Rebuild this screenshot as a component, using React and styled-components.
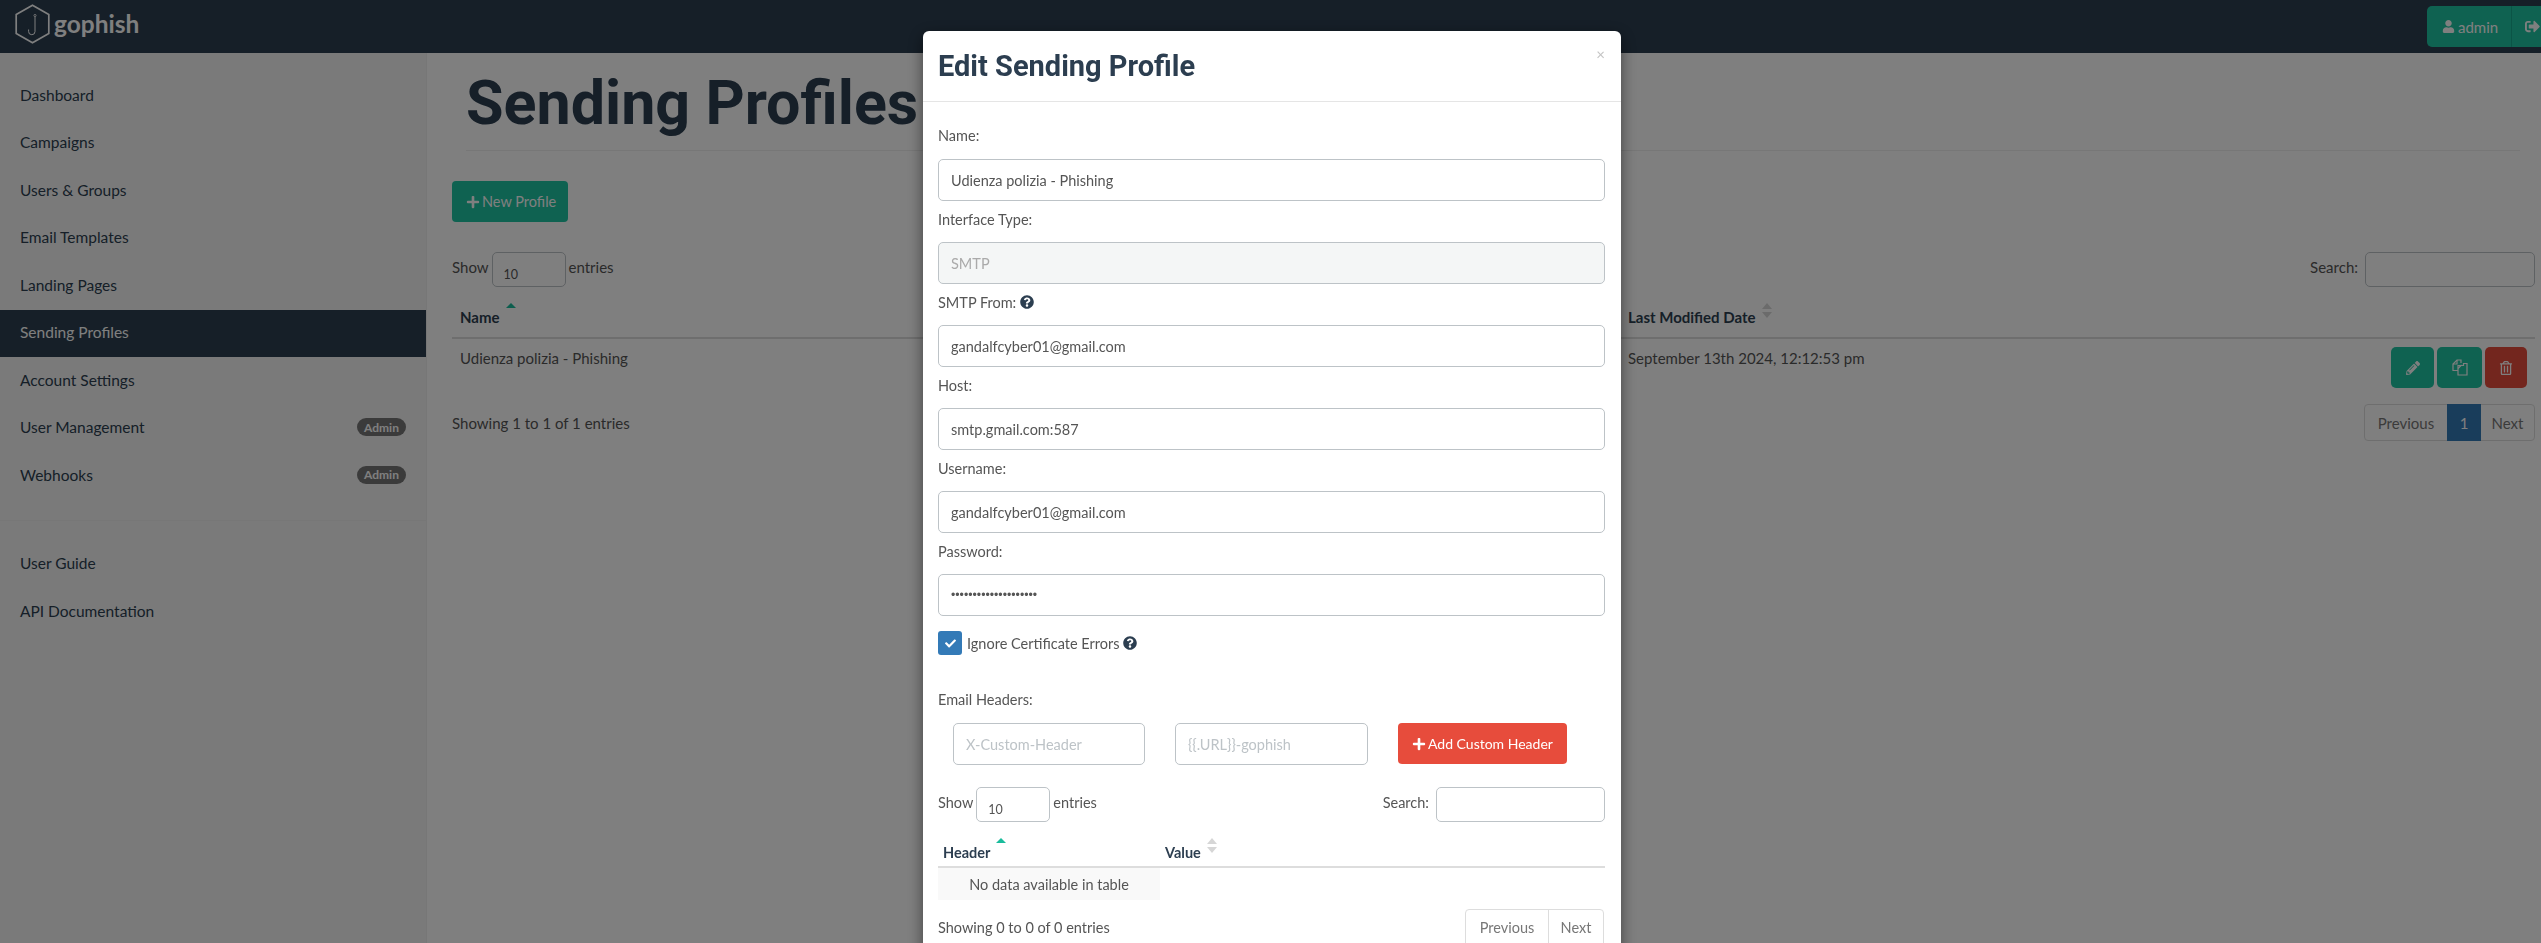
import React from 'react';
import styled, { createGlobalStyle } from 'styled-components';
import { FaPlus, FaUser, FaSignOutAlt, FaPencilAlt, FaRegTrashAlt, FaQuestionCircle, FaCheck } from 'react-icons/fa';

const GlobalStyle = createGlobalStyle`
  html, body {
    margin: 0;
    height: 100%;
    overflow: hidden;
    background: #fff;
    font-family: Lato, "Liberation Sans", sans-serif;
    color: #2c3e50;
  }
  * { box-sizing: border-box; }
`;

const Navbar = styled.header`
  height: 53px;
  background: #2c3e50;
  display: flex;
  align-items: flex-start;
  justify-content: space-between;
`;

const Brand = styled.div`
  display: flex;
  align-items: center;
  gap: 4px;
  padding: 4px 0 0 15px;
  color: #fff;
  font-size: 24.5px;
  font-weight: 700;
  line-height: 40px;
`;

const UserGroup = styled.div`
  display: flex;
  margin: 6px 0 0 0;
  height: 41px;
  width: 114px;
  flex: none;
  background: #1fc4a3;
  border-radius: 5px 0 0 5px;
  color: #fff;
  font-size: 15px;
  align-items: center;
`;

const UserPart = styled.div`
  width: 85px;
  height: 100%;
  padding-left: 15px;
  display: flex;
  align-items: center;
  gap: 3px;
  border-right: 1px solid #17a98c;
`;

const LogoutPart = styled.div`
  padding-left: 13px;
  display: flex;
  align-items: center;
  font-size: 15px;
`;

const Layout = styled.div`
  display: flex;
  height: 890px;
`;

const Sidebar = styled.nav`
  width: 427px;
  flex: none;
  background: #f5f5f5;
  border-right: 1px solid #eee;
  padding-top: 19px;
`;

const NavItem = styled.div`
  height: 47.5px;
  display: flex;
  align-items: center;
  justify-content: space-between;
  padding: 0 20px 2px;
  font-size: 15.5px;
  color: ${p => (p.$active ? '#fff' : '#2c3e50')};
  background: ${p => (p.$active ? '#2c3e50' : 'transparent')};
`;

const Badge = styled.span`
  width: 49px;
  height: 18px;
  border-radius: 9px;
  background: #777;
  color: #fff;
  font-size: 12px;
  font-weight: 700;
  display: flex;
  align-items: center;
  justify-content: center;
`;

const NavDivider = styled.div`
  height: 1px;
  background: #eee;
  margin: 20px 0 20px;
`;

const Main = styled.main`
  flex: 1;
  padding: 0 6px 0 25px;
  min-width: 0;
  color: #555;
  font-size: 15px;
`;

const PageHeader = styled.div`
  margin: 0 15px 0 14px;
  height: 98px;
  border-bottom: 1px solid #eee;
`;

const PageTitle = styled.h1`
  margin: 0;
  padding-top: 14px;
  font-family: Roboto, sans-serif;
  font-weight: 700;
  font-size: 61px;
  line-height: 72px;
  color: #2c3e50;
`;

const PrimaryButton = styled.button`
  display: flex;
  align-items: center;
  gap: 2px;
  height: 41px;
  width: 116px;
  margin-top: 30px;
  padding: 0 0 0 14px;
  border: 0;
  border-radius: 4px;
  background: #1fc4a3;
  color: #fff;
  font: inherit;
  font-size: 14.5px;
  svg { font-size: 14px; }
`;

const ControlRow = styled.div`
  display: flex;
  justify-content: space-between;
  align-items: center;
  margin-top: ${p => p.$top}px;
`;

const ControlLabel = styled.label`
  display: flex;
  align-items: flex-start;
  gap: 3px;
  line-height: 31px;
`;

const PageSelect = styled.div`
  width: ${p => p.$width}px;
  height: 35px;
  border: 1px solid #bdc3c7;
  border-radius: 5px;
  background: #fff;
  padding: 14px 0 0 11px;
  font-size: 12.5px;
  color: #555;
  line-height: 16px;
`;

const SearchInput = styled.input`
  width: ${p => p.$width}px;
  height: 35px;
  border: 1px solid #bdc3c7;
  border-radius: 5px;
  background: #fff;
  outline: none;
  margin-left: 4px;
`;

const DataTable = styled.table`
  width: 100%;
  border-collapse: collapse;
  table-layout: fixed;
  margin-top: ${p => p.$top}px;
`;

const HeadCell = styled.th`
  text-align: left;
  width: ${p => (p.$width ? `${p.$width}px` : 'auto')};
  height: ${p => p.$height}px;
  padding: ${p => p.$padTop}px 8px 0 ${p => p.$pad}px;
  border-bottom: 2px solid #ddd;
  color: #2c3e50;
  font-weight: 700;
  white-space: nowrap;
  vertical-align: top;
`;

const BodyCell = styled.td`
  padding: ${p => (p.$right ? 8 : 10)}px 8px 8px;
  vertical-align: top;
  text-align: ${p => (p.$right ? 'right' : 'left')};
  height: 57px;
  white-space: nowrap;
`;

const EmptyCell = styled.td`
  height: 33px;
  background: #f9f9f9;
  text-align: center;
  padding: 0;
`;

const SortMark = styled.svg`
  margin-left: 6px;
  width: 10px;
  height: 15px;
  vertical-align: 2px;
  overflow: visible;
  transform: translateY(-3px);
`;

const ActionRow = styled.div`
  display: inline-flex;
  gap: 3px;
`;

const IconButton = styled.button`
  width: ${p => p.$width}px;
  height: 41px;
  border: 0;
  border-radius: 5px;
  background: ${p => (p.$danger ? '#e74c3c' : '#1fc4a3')};
  color: #fff;
  font-size: 14px;
  display: flex;
  align-items: center;
  justify-content: center;
  padding: 0;
`;

const FooterRow = styled.div`
  display: flex;
  justify-content: space-between;
  align-items: flex-start;
  margin-top: ${p => p.$top}px;
`;

const FooterText = styled.div`
  line-height: 20px;
  padding-top: ${p => p.$top}px;
`;

const Pagination = styled.div`
  display: flex;
  height: 37px;
  flex: none;
  border: 1px solid #ddd;
  border-radius: 4px;
  background: #fff;
  color: #b0b5b9;
`;

const PageLink = styled.div`
  display: flex;
  align-items: center;
  justify-content: center;
  width: ${p => p.$width}px;
  margin: ${p => (p.$current ? '-1px 0' : '0')};
  background: ${p => (p.$current ? '#337ab7' : 'transparent')};
  color: ${p => (p.$current ? '#fff' : '#777')};
  border-right: ${p => (p.$line ? '1px solid #ddd' : '0')};
`;

const Backdrop = styled.div`
  position: fixed;
  inset: 0;
  background: rgba(0, 0, 0, 0.5);
`;

const ModalLayer = styled.div`
  position: fixed;
  inset: 0;
  overflow: hidden;
  padding: 31px 0 0 923px;
`;

const ModalCard = styled.div`
  position: relative;
  width: 698px;
  background: #fff;
  border-radius: 6px;
  box-shadow: 0 5px 15px rgba(0, 0, 0, 0.5);
  color: #555;
  font-size: 14.5px;
`;

const ModalHeader = styled.div`
  height: 71px;
  border-bottom: 1px solid #e5e5e5;
  padding: 0 15px;
`;

const ModalTitle = styled.h4`
  margin: 0;
  font-family: Roboto, sans-serif;
  font-size: 29px;
  font-weight: 700;
  line-height: 70px;
  color: #2c3e50;
`;

const CloseMark = styled.span`
  position: absolute;
  top: 13px;
  right: 16px;
  color: #c4c4c4;
  font-size: 15px;
  line-height: 20px;
`;

const ModalBody = styled.div`
  padding: 0 16px 0 15px;
`;

const FieldLabel = styled.label`
  display: flex;
  align-items: center;
  gap: 4px;
  height: 57px;
  padding-top: 9px;
  color: #555;
  svg { color: #2c3e50; font-size: 14px; }
`;

const FieldLabelCompact = styled(FieldLabel)`
  height: 41px;
  padding: 0 0 5px;
`;

const EmailHeadersLabel = styled(FieldLabel)`
  height: 68px;
  padding-top: 21px;
`;

const TextField = styled.input`
  display: block;
  width: ${p => (p.$width ? `${p.$width}px` : '100%')};
  height: 42px;
  border: 1px solid #bdc3c7;
  border-radius: 5px;
  padding: 0 12px;
  font: inherit;
  color: ${p => (p.disabled ? '#aaa' : '#555')};
  background: ${p => (p.disabled ? '#f4f6f6' : '#fff')};
  outline: none;
  &::placeholder { color: #bdc3c7; opacity: 1; }
  &[type='password'] {
    font-family: "Liberation Sans", sans-serif;
    font-size: 12.3px;
  }
`;

const CheckRow = styled.div`
  display: flex;
  align-items: center;
  gap: 4px;
  margin-top: 15px;
  height: 24px;
  svg { color: #2c3e50; font-size: 14px; }
`;

const CheckBox = styled.span`
  width: 24px;
  height: 24px;
  margin-right: 1px;
  border-radius: 3px;
  background: #337ab7;
  color: #fff;
  display: flex;
  align-items: center;
  justify-content: center;
  svg { color: #fff; font-size: 11px; }
`;

const HeaderForm = styled.div`
  display: flex;
  gap: 30px;
  padding-left: 15px;
  align-items: flex-start;
`;

const AddButton = styled.button`
  display: flex;
  align-items: center;
  gap: 2px;
  width: 169px;
  height: 41px;
  border: 0;
  border-radius: 4px;
  background: #e74c3c;
  color: #fff;
  font: inherit;
  font-size: 14px;
  padding: 0 0 0 14px;
  white-space: nowrap;
  svg { font-size: 14px; }
`;

const SubPagination = styled(Pagination)`
  height: 60px;
  margin-right: 1px;
  padding-bottom: 23px;
`;

const Caret = ({ both }) =>
  both ? (
    <SortMark viewBox="0 0 10 15" style={{ opacity: 0.3 }}>
      <path d="M5 0l5 6H0zM5 15l-5-6h10z" fill="#777" />
    </SortMark>
  ) : (
    <SortMark viewBox="0 0 10 15">
      <path d="M5 0l5 5H0z" fill="#1abc9c" />
    </SortMark>
  );

const BrandLogo = () => (
  <svg width="35" height="40" viewBox="0 0 35 40" fill="none" stroke="#fff">
    <path d="M17.5 1.2L33.8 10.6V29.4L17.5 38.8L1.2 29.4V10.6Z" strokeWidth="1.7" />
    <path d="M20 12.5V27.5a3.2 3.2 0 0 1-6.4 0V25.5" strokeWidth="1" />
    <circle cx="20" cy="11.5" r="1.1" strokeWidth="0.8" />
  </svg>
);

const CopyIcon = () => (
  <svg width="16" height="17" viewBox="0 0 16 17" fill="none" stroke="currentColor" strokeWidth="1.2">
    <path d="M6 11.5H1V5L5 1H9V4" />
    <path d="M5 1V5H1" />
    <path d="M6 6.5H11.5V4.5H15V16H6Z" />
    <path d="M6 9.5L9.5 6" />
  </svg>
);

const navTop = ['Dashboard', 'Campaigns', 'Users & Groups', 'Email Templates', 'Landing Pages', 'Sending Profiles', 'Account Settings', 'User Management', 'Webhooks'];
const fields = [
  ['Username:', 'gandalfcyber01@gmail.com', 'text'],
  ['Password:', 'xxxxxxxxxxxxxxxxxxxx', 'password'],
];

export default function App() {
  return (
    <>
      <GlobalStyle />
      <Navbar>
        <Brand>
          <BrandLogo />
          gophish
        </Brand>
        <UserGroup>
          <UserPart>
            <FaUser size={13} />
            admin
          </UserPart>
          <LogoutPart>
            <FaSignOutAlt />
          </LogoutPart>
        </UserGroup>
      </Navbar>
      <Layout>
        <Sidebar>
          {navTop.map(name => (
            <NavItem key={name} $active={name === 'Sending Profiles'}>
              {name}
              {(name === 'User Management' || name === 'Webhooks') && <Badge>Admin</Badge>}
            </NavItem>
          ))}
          <NavDivider />
          <NavItem>User Guide</NavItem>
          <NavItem>API Documentation</NavItem>
        </Sidebar>
        <Main>
          <PageHeader>
            <PageTitle>Sending Profiles</PageTitle>
          </PageHeader>
          <PrimaryButton>
            <FaPlus />
            New Profile
          </PrimaryButton>
          <ControlRow $top={30}>
            <ControlLabel>
              Show <PageSelect $width={74}>10</PageSelect> entries
            </ControlLabel>
            <ControlLabel>
              Search: <SearchInput $width={170} readOnly />
            </ControlLabel>
          </ControlRow>
          <DataTable $top={13}>
            <thead>
              <tr>
                <HeadCell $width={488} $height={38} $pad={8} $padTop={6}>
                  Name
                  <Caret />
                </HeadCell>
                <HeadCell $width={680} $height={38} $pad={8} $padTop={6}>
                  Interface Type
                  <Caret both />
                </HeadCell>
                <HeadCell $width={500} $height={38} $pad={8} $padTop={6}>
                  Last Modified Date
                  <Caret both />
                </HeadCell>
                <HeadCell $height={38} $pad={8} $padTop={6} />
              </tr>
            </thead>
            <tbody>
              <tr>
                <BodyCell>Udienza polizia - Phishing</BodyCell>
                <BodyCell>SMTP</BodyCell>
                <BodyCell>September 13th 2024, 12:12:53 pm</BodyCell>
                <BodyCell $right>
                  <ActionRow>
                    <IconButton $width={43}>
                      <FaPencilAlt />
                    </IconButton>
                    <IconButton $width={45}>
                      <CopyIcon />
                    </IconButton>
                    <IconButton $width={42} $danger>
                      <FaRegTrashAlt />
                    </IconButton>
                  </ActionRow>
                </BodyCell>
              </tr>
            </tbody>
          </DataTable>
          <FooterRow $top={8}>
            <FooterText $top={9}>Showing 1 to 1 of 1 entries</FooterText>
            <Pagination>
              <PageLink $width={82}>Previous</PageLink>
              <PageLink $width={34} $current>1</PageLink>
              <PageLink $width={53}>Next</PageLink>
            </Pagination>
          </FooterRow>
        </Main>
      </Layout>
      <Backdrop />
      <ModalLayer>
        <ModalCard>
          <ModalHeader>
            <ModalTitle>Edit Sending Profile</ModalTitle>
            <CloseMark>×</CloseMark>
          </ModalHeader>
          <ModalBody>
            <FieldLabel>Name:</FieldLabel>
            <TextField readOnly defaultValue="Udienza polizia - Phishing" />
            <FieldLabelCompact>Interface Type:</FieldLabelCompact>
            <TextField disabled defaultValue="SMTP" />
            <FieldLabelCompact>
              SMTP From: <FaQuestionCircle />
            </FieldLabelCompact>
            <TextField readOnly defaultValue="gandalfcyber01@gmail.com" />
            <FieldLabelCompact>Host:</FieldLabelCompact>
            <TextField readOnly defaultValue="smtp.gmail.com:587" />
            {fields.map(([label, value, type]) => (
              <React.Fragment key={label}>
                <FieldLabelCompact>{label}</FieldLabelCompact>
                <TextField readOnly type={type} defaultValue={value} />
              </React.Fragment>
            ))}
            <CheckRow>
              <CheckBox>
                <FaCheck />
              </CheckBox>
              Ignore Certificate Errors <FaQuestionCircle />
            </CheckRow>
            <EmailHeadersLabel as="div">Email Headers:</EmailHeadersLabel>
            <HeaderForm>
              <TextField $width={192} readOnly placeholder="X-Custom-Header" />
              <TextField $width={193} readOnly placeholder="{{.URL}}-gophish" />
              <AddButton>
                <FaPlus />
                Add Custom Header
              </AddButton>
            </HeaderForm>
            <ControlRow $top={22}>
              <ControlLabel>
                Show <PageSelect $width={74}>10</PageSelect> entries
              </ControlLabel>
              <ControlLabel>
                Search: <SearchInput $width={169} readOnly />
              </ControlLabel>
            </ControlRow>
            <DataTable $top={9}>
              <thead>
                <tr>
                  <HeadCell $width={222} $height={36} $pad={5} $padTop={10}>
                    Header
                    <Caret />
                  </HeadCell>
                  <HeadCell $height={36} $pad={5} $padTop={10}>
                    Value
                    <Caret both />
                  </HeadCell>
                </tr>
              </thead>
              <tbody>
                <tr>
                  <EmptyCell>No data available in table</EmptyCell>
                  <td />
                </tr>
              </tbody>
            </DataTable>
            <FooterRow $top={9}>
              <FooterText $top={9}>Showing 0 to 0 of 0 entries</FooterText>
              <SubPagination>
                <PageLink $width={83} $line>Previous</PageLink>
                <PageLink $width={54}>Next</PageLink>
              </SubPagination>
            </FooterRow>
          </ModalBody>
        </ModalCard>
      </ModalLayer>
    </>
  );
}
